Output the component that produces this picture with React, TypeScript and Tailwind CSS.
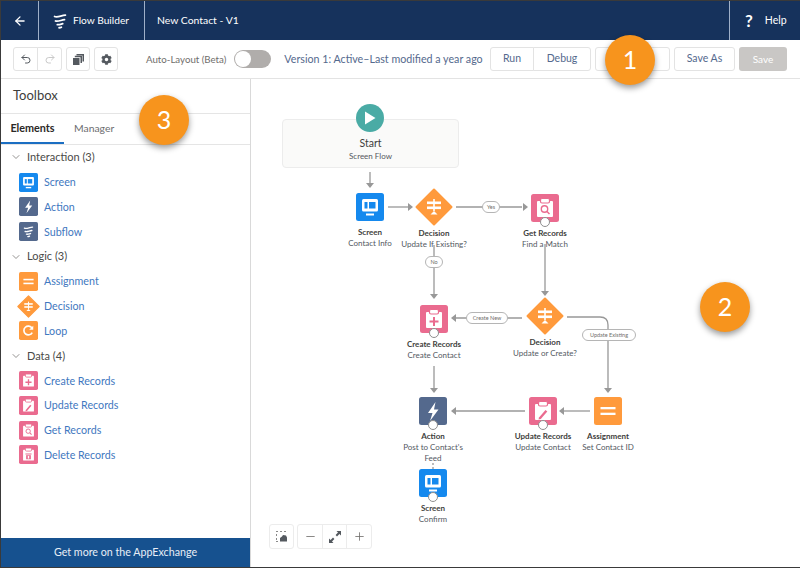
import { ReactNode } from "react";
import { ArrowLeft, ChevronDown, Plus, Minus, Undo2, Redo2 } from "lucide-react";
import { FaCog } from "react-icons/fa";

type IconKind = "screen" | "action" | "subflow" | "assignment" | "decision" | "loop" | "create" | "update" | "get" | "delete";

const BG: Record<IconKind, string> = {
  screen: "#1589ee",
  action: "#54698d",
  subflow: "#54698d",
  assignment: "#ff9a3c",
  decision: "#ff9a3c",
  loop: "#ff9a3c",
  create: "#ea6b8f",
  update: "#ea6b8f",
  get: "#ea6b8f",
  delete: "#ea6b8f",
};

function SubflowGlyph({ color = "#fff" }: { color?: string }) {
  return (
    <g fill="none" stroke={color} strokeWidth="2" strokeLinecap="round">
      <path d="M8 9c3 1.500 7 -1 12 -1.500" />
      <path d="M9 14c3 1 6 -1 10 -1.500" />
      <path d="M11 18c2 .5 4 -.5 6 -1" />
      <path d="M13 21.500c1 0 2 -.3 2.500 -.6" />
    </g>
  );
}

function Clipboard({ children }: { children: ReactNode }) {
  return (
    <>
      <path d="M7 7h14a1 1 0 0 1 1 1v14a1 1 0 0 1-1 1H7a1 1 0 0 1-1-1V8a1 1 0 0 1 1-1z" fill="#fff" />
      <rect x="9.500" y="4.500" width="9" height="4.500" rx="1.500" fill="#fff" stroke="#ea6b8f" strokeWidth="1.200" />
      {children}
    </>
  );
}

function Glyph({ kind }: { kind: IconKind }) {
  switch (kind) {
    case "screen":
      return (
        <>
          <rect x="6" y="6" width="16" height="12.500" rx="1.500" fill="#fff" />
          <rect x="8.500" y="9" width="3" height="6.500" fill="#1589ee" />
          <rect x="13" y="9" width="6.500" height="6.500" fill="#1589ee" />
          <rect x="10" y="20.500" width="8" height="2" fill="#fff" />
        </>
      );
    case "action":
      return <path d="M16.500 5 9 16h4.500L11 24l8.500-11.500H15z" fill="#fff" />;
    case "subflow":
      return <SubflowGlyph />;
    case "assignment":
      return (
        <>
          <rect x="6.500" y="10" width="15" height="2.300" fill="#fff" />
          <rect x="6.500" y="15.700" width="15" height="2.300" fill="#fff" />
        </>
      );
    case "decision":
      return (
        <>
          <rect x="7" y="8.500" width="14" height="2.600" fill="#fff" />
          <rect x="7" y="13.500" width="14" height="2.600" fill="#fff" />
          <rect x="13.200" y="6" width="1.600" height="12" fill="#fff" />
          <path d="M10.500 21.500 14 18l3.500 3.500z" fill="#fff" />
        </>
      );
    case "loop":
      return (
        <>
          <path d="M19.500 17a6.500 6.500 0 1 1-.3-6.500" fill="none" stroke="#fff" strokeWidth="2.400" />
          <path d="M21 7v6h-6z" fill="#fff" />
        </>
      );
    case "create":
      return (
        <Clipboard>
          <path d="M13 12h2v3.500h3.500v2H15V21h-2v-3.500H9.500v-2H13z" fill="#ea6b8f" />
        </Clipboard>
      );
    case "update":
      return (
        <Clipboard>
          <path d="m10 20.500 6.500-7.500 1.800 1.500-6.500 7.500-2.300.5z" fill="#ea6b8f" />
        </Clipboard>
      );
    case "get":
      return (
        <Clipboard>
          <circle cx="13.500" cy="15" r="3.200" fill="none" stroke="#ea6b8f" strokeWidth="1.400" />
          <path d="m16 17.500 2.500 2.500" stroke="#ea6b8f" strokeWidth="1.500" />
        </Clipboard>
      );
    case "delete":
      return (
        <Clipboard>
          <path d="M10.500 15h7v6h-7z" fill="#ea6b8f" />
          <rect x="9.500" y="12.500" width="9" height="1.500" fill="#ea6b8f" />
          <rect x="13" y="16" width="2" height="4" fill="#fff" />
        </Clipboard>
      );
  }
}

function FlowIcon({ kind, size }: { kind: IconKind; size: number }) {
  return (
    <svg width={size} height={size} viewBox="0 0 28 28" className="block overflow-visible">
      {kind === "decision" ? (
        <path d="M14 -3.500 31.500 14 14 31.500 -3.500 14z" fill={BG[kind]} stroke={BG[kind]} strokeLinejoin="round" strokeWidth="2" />
      ) : (
        <rect width="28" height="28" rx="2.500" fill={BG[kind]} />
      )}
      <Glyph kind={kind} />
    </svg>
  );
}

const SECTIONS: { title: string; items: [IconKind, string][] }[] = [
  { title: "Interaction (3)", items: [["screen", "Screen"], ["action", "Action"], ["subflow", "Subflow"]] },
  { title: "Logic (3)", items: [["assignment", "Assignment"], ["decision", "Decision"], ["loop", "Loop"]] },
  {
    title: "Data (4)",
    items: [["create", "Create Records"], ["update", "Update Records"], ["get", "Get Records"], ["delete", "Delete Records"]],
  },
];

// x, y are the icon's top-left on the canvas (canvas origin is 251,79 on the page)
const NODES: { kind: IconKind; x: number; y: number; title: string; sub: string[]; dot?: boolean }[] = [
  { kind: "screen", x: 105, y: 114, title: "Screen", sub: ["Contact Info"] },
  { kind: "decision", x: 169, y: 114, title: "Decision", sub: ["Update If Existing?"] },
  { kind: "get", x: 280, y: 115, title: "Get Records", sub: ["Find a Match"], dot: true },
  { kind: "decision", x: 280, y: 223, title: "Decision", sub: ["Update or Create?"] },
  { kind: "create", x: 169, y: 226, title: "Create Records", sub: ["Create Contact"], dot: true },
  { kind: "assignment", x: 343, y: 318, title: "Assignment", sub: ["Set Contact ID"] },
  { kind: "update", x: 278, y: 318, title: "Update Records", sub: ["Update Contact"], dot: true },
  { kind: "action", x: 168, y: 318, title: "Action", sub: ["Post to Contact's", "Feed"], dot: true },
  { kind: "screen", x: 168, y: 390, title: "Screen", sub: ["Confirm"], dot: true },
];

const PILLS: { x: number; y: number; w: number; label: string }[] = [
  { x: 231, y: 122, w: 18, label: "Yes" },
  { x: 174, y: 177, w: 18, label: "No" },
  { x: 215, y: 233, w: 42, label: "Create New" },
  { x: 331, y: 250, w: 54, label: "Update Existing" },
];

function Connectors() {
  const line = "#989898";
  const head = (x: number, y: number, dir: "down" | "right" | "left") => {
    const d =
      dir === "down"
        ? `M${x - 4} ${y - 4}h8l-4 5z`
        : dir === "right"
          ? `M${x - 4} ${y - 4}v8l5 -4z`
          : `M${x + 4} ${y - 4}v8l-5 -4z`;
    return <path d={d} fill={line} stroke="none" />;
  };
  return (
    <svg width="549" height="487" className="absolute left-0 top-0" fill="none" stroke={line} strokeWidth="1.300">
      <path d="M119 93v14" />
      {head(119, 108, "down")}
      <path d="M137 128h20" />
      {head(161, 128, "right")}
      <path d="M205 128h66" />
      {head(276, 128, "right")}
      <path d="M183 166v52" />
      {head(183, 219, "down")}
      <path d="M294 165v50" />
      {head(294, 216, "down")}
      <path d="M271 239h-66" />
      {head(201, 239, "left")}
      <path d="M316 238h33q8 0 8 8v66" />
      {head(357, 313, "down")}
      <path d="M339 332h-26" />
      {head(309, 332, "left")}
      <path d="M274 332h-70" />
      {head(201, 332, "left")}
      <path d="M183 287v25" />
      {head(183, 313, "down")}
      <path d="M182 384v6" strokeDasharray="2 2" />
    </svg>
  );
}

function Canvas() {
  return (
    <div className="relative flex-1">
      <Connectors />

      <div className="absolute left-[31px] top-[40px] flex h-[49px] w-[177px] flex-col items-center justify-end rounded-sm border border-[#ececec] bg-[#fafaf9] pb-[4px]">
        <span className="text-[10.500px] leading-[14px] text-[#3e3e3c]">Start</span>
        <span className="text-[8px] leading-[13px] text-[#54595f]">Screen Flow</span>
      </div>
      <div className="absolute left-[105px] top-[25px] flex h-[28px] w-[28px] items-center justify-center rounded-full bg-[#4aaba5]">
        <svg width="12" height="14" viewBox="0 0 12 14">
          <path d="M1 0.500 11.500 7 1 13.500z" fill="#fff" />
        </svg>
      </div>

      {NODES.map((n, i) => (
        <div key={i} className="absolute h-[28px] w-[28px]" style={{ left: n.x, top: n.y }}>
          <FlowIcon kind={n.kind} size={28} />
          {n.dot && <div className="absolute left-[9px] top-[23px] h-[10px] w-[10px] rounded-full border border-[#8f8f8f] bg-white" />}
          <div className={`absolute left-1/2 flex w-[110px] -translate-x-1/2 flex-col items-center ${n.kind === "decision" ? "top-[34px]" : "top-[33px]"}`}>
            <span className="text-[8px] font-bold leading-[12px] text-[#3e3e3c]">{n.title}</span>
            {n.sub.map((s) => (
              <span key={s} className="text-[8px] leading-[11px] text-[#54595f]">
                {s}
              </span>
            ))}
          </div>
        </div>
      ))}

      {PILLS.map((p) => (
        <div
          key={p.label}
          className="absolute flex h-[12px] items-center justify-center rounded-full border border-[#b5b5b5] bg-white text-[5.5px] text-[#706e6b]"
          style={{ left: p.x, top: p.y, width: p.w }}
        >
          {p.label}
        </div>
      ))}

      <div className="absolute bottom-[18px] left-[18px] flex gap-[3px]">
        <button className="flex h-[25px] w-[25px] items-center justify-center rounded-[3px] border border-[#ececec] bg-white">
          <svg width="11" height="11" viewBox="0 0 11 11">
            <path d="M0 0h2v1H0zm4 0h2v1H4zm4 0h2v1H8zM0 3h1v2H0zm0 4h1v2H0zm0 3h2v1H0z" fill="#8a8a8a" />
            <path d="M4 7l2-1.500 1-1.500 3 .5 1 2v4H4z" fill="#54595f" />
          </svg>
        </button>
        <div className="flex h-[25px] rounded-[3px] border border-[#ececec] bg-white text-[#706e6b]">
          <div className="flex w-[25px] items-center justify-center border-r border-[#ececec]">
            <Minus size={13} strokeWidth={1.500} />
          </div>
          <div className="flex w-[24px] items-center justify-center border-r border-[#ececec]">
            <svg width="12" height="12" viewBox="0 0 12 12" fill="#54595f">
              <path d="M7.500 0H12v4.500L10.400 3 8 5.400 6.600 4 9 1.600zM4.500 12H0V7.500L1.600 9 4 6.600 5.400 8 3 10.400z" />
            </svg>
          </div>
          <div className="flex w-[24px] items-center justify-center">
            <Plus size={13} strokeWidth={1.500} />
          </div>
        </div>
      </div>
    </div>
  );
}

function Toolbox() {
  return (
    <aside className="flex w-[250px] flex-col border-r border-[#d9d9d9]">
      <div className="flex h-[34px] items-center pl-[12px] text-[13px] text-[#3e3e3c]">Toolbox</div>
      <div className="flex h-[32px] border-y border-[#e5e5e5]">
        <div className="flex w-[63px] items-center justify-center border-b-2 border-[#1b6ec2] text-[10.800px] font-bold text-[#2b2826]">Elements</div>
        <div className="flex items-center pl-[10px] text-[10.400px] text-[#6b6d70]">Manager</div>
      </div>
      <div className="flex-1">
        {SECTIONS.map((s) => (
          <div key={s.title}>
            <div className="flex h-[24.800px] items-center pl-[9px] text-[11px] text-[#4a4a48]">
              <ChevronDown size={12} strokeWidth={1.500} className="mr-[5px] text-[#706e6b]" />
              {s.title}
            </div>
            {s.items.map(([kind, label]) => (
              <div key={label} className="flex h-[24.800px] items-center pl-[18px]">
                <div className="mr-[6px] flex w-[19px] justify-center">
                  <FlowIcon kind={kind} size={kind === "decision" ? 17 : 19} />
                </div>
                <span className="text-[10.700px] text-[#3f78c0]">{label}</span>
              </div>
            ))}
          </div>
        ))}
      </div>
      <div className="flex h-[29px] items-center justify-center bg-[#16518f] text-[10.700px] text-[#e8eef6]">Get more on the AppExchange</div>
    </aside>
  );
}

function ToolButton({ children, className = "" }: { children?: ReactNode; className?: string }) {
  return <div className={`flex h-[24px] items-center justify-center border border-[#e3e3e3] bg-white text-[10.500px] text-[#54698d] ${className}`}>{children}</div>;
}

function Toolbar() {
  return (
    <div className="flex h-[39px] items-center border-b border-[#e3e3e3] pl-[12px] pr-[13px]">
      <ToolButton className="w-[25px] rounded-l-[3px]">
        <Undo2 size={12} className="text-[#54595f]" />
      </ToolButton>
      <ToolButton className="-ml-px w-[25px] rounded-r-[3px]">
        <Redo2 size={12} className="text-[#c9c9c9]" />
      </ToolButton>
      <ToolButton className="ml-[4px] w-[24px] rounded-[3px]">
        <svg width="11" height="11" viewBox="0 0 11 11" fill="#54595f">
          <path d="M3.500 0H11v7.500H9.500V1.500h-6z" />
          <path d="M1.800 1.800H9v7.200H7.500V3.300H1.800z" />
          <rect x="0" y="4" width="6.500" height="7" />
        </svg>
      </ToolButton>
      <ToolButton className="ml-[4px] w-[24px] rounded-[3px]">
        <FaCog size={11} className="text-[#54595f]" />
      </ToolButton>
      <span className="ml-[28px] text-[9.700px] text-[#706e6b]">Auto-Layout (Beta)</span>
      <div className="ml-[8px] flex h-[18px] w-[37px] items-center rounded-full bg-[#b0adab] pl-[1px]">
        <div className="h-[16px] w-[16px] rounded-full bg-white" />
      </div>
      <span className="ml-[13px] text-[10.700px] text-[#54698d]">Version 1: Active–Last modified a year ago</span>
      <div className="ml-auto flex">
        <ToolButton className="w-[44px] rounded-l-[3px]">Run</ToolButton>
        <ToolButton className="-ml-px w-[58px] rounded-r-[3px]">Debug</ToolButton>
        <ToolButton className="ml-[4px] w-[75px] rounded-[3px]" />
        <ToolButton className="ml-[4px] w-[61px] rounded-[3px]">Save As</ToolButton>
        <div className="ml-[4px] flex h-[24px] w-[48px] items-center justify-center rounded-[3px] bg-[#c9c7c5] text-[10px] text-white">Save</div>
      </div>
    </div>
  );
}

function Header() {
  return (
    <header className="flex h-[39px] items-center bg-[#16325c] text-white">
      <div className="flex h-full w-[38px] items-center justify-center border-r border-[#9fb0c8]">
        <ArrowLeft size={14} strokeWidth={2.200} />
      </div>
      <div className="flex h-full w-[106px] items-center border-r border-[#9fb0c8] pl-[12px] text-[10.200px]">
        <svg width="18" height="18" viewBox="4 4 20 20" className="mr-[4px]">
          <SubflowGlyph />
        </svg>
        Flow Builder
      </div>
      <span className="pl-[12px] text-[10.400px]">New Contact - V1</span>
      <div className="ml-auto flex h-full w-[71px] items-center border-l border-[#9fb0c8] pl-[15px] text-[10.500px]">
        <span className="mr-[12px] text-[17px] font-bold">?</span>
        Help
      </div>
    </header>
  );
}

function Badge({ n, className }: { n: number; className: string }) {
  return (
    <div
      className={`absolute flex h-[50px] w-[50px] items-center justify-center rounded-full bg-[#f7941d] text-[25px] text-white shadow-[0_3px_6px_rgba(0,0,0,0.4)] ${className}`}
    >
      {n}
    </div>
  );
}

export default function App() {
  return (
    <div className="relative flex h-[568px] w-[800px] flex-col overflow-hidden border-y border-l border-[#3a3a3a] bg-white font-['Lato','Noto_Sans',sans-serif]">
      <Header />
      <Toolbar />
      <div className="flex min-h-0 flex-1">
        <Toolbox />
        <Canvas />
      </div>
      <Badge n={1} className="left-[604px] top-[34px]" />
      <Badge n={2} className="left-[699px] top-[281px]" />
      <Badge n={3} className="left-[138px] top-[94px]" />
    </div>
  );
}
